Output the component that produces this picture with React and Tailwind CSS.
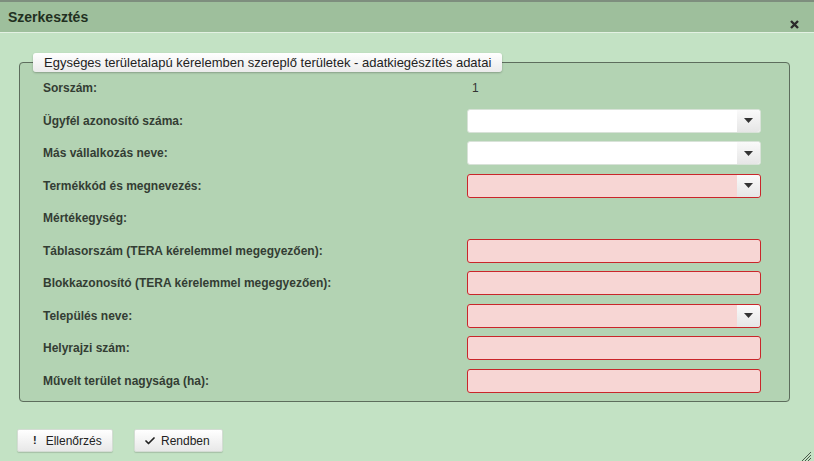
import { Check } from "lucide-react";

const rows = [
  { label: "Sorszám:", type: "text", value: "1" },
  { label: "Ügyfél azonosító száma:", type: "select" },
  { label: "Más vállalkozás neve:", type: "select" },
  { label: "Termékkód és megnevezés:", type: "select", error: true },
  { label: "Mértékegység:", type: "none" },
  { label: "Táblasorszám (TERA kérelemmel megegyezően):", type: "input", error: true },
  { label: "Blokkazonosító (TERA kérelemmel megegyezően):", type: "input", error: true },
  { label: "Település neve:", type: "select", error: true },
  { label: "Helyrajzi szám:", type: "input", error: true },
  { label: "Művelt terület nagysága (ha):", type: "input", error: true },
];

const Field = ({ row }) => {
  if (row.type === "text") {
    return <span className="pl-[5px] text-[12px] text-[#333]">{row.value}</span>;
  }
  if (row.type === "none") return null;
  const box = row.error
    ? "border-[#c9262a] bg-[#f7d6d4]"
    : "border-[#d8e2d8] bg-white";
  return (
    <div className={`flex h-[24px] w-[294px] items-stretch rounded-[3px] border ${box}`}>
      <div className="flex-1" />
      {row.type === "select" && (
        <div className="flex w-[23px] items-center justify-center rounded-r-[3px] bg-gradient-to-b from-[#fafafa] to-[#e6e6e6]">
          <svg width="9" height="5" viewBox="0 0 9 5">
            <path d="M0 0h9L4.5 5z" fill="#333" />
          </svg>
        </div>
      )}
    </div>
  );
};

const App = () => {
  return (
    <div
      className="flex h-[461px] w-[814px] flex-col overflow-hidden bg-[#c3e2c4] text-[#2f3a2f]"
      style={{ fontFamily: '"Liberation Sans", Arial, sans-serif' }}
    >
      <div className="h-[2px] shrink-0 bg-[#7e8e7e]" />
      <div className="flex h-[31px] shrink-0 items-start justify-between border-b border-[#e3f1e3] bg-[#9ebf9c] pl-[8px] pr-[15px]">
        <h1 className="pt-[5px] text-[14px] font-bold text-[#22301f]">Szerkesztés</h1>
        <svg className="mt-[18px]" width="9" height="9" viewBox="0 0 9 9">
          <path d="M1 1l7 7M8 1L1 8" stroke="#2a2a2a" strokeWidth="2.4" />
        </svg>
      </div>

      <fieldset className="ml-[19px] mt-[20px] w-[771px] shrink-0 rounded-[4px] border border-[#5d6d5d] bg-[#b3d3b3] pb-[4px] pl-[23px] pr-[27px]">
        <legend className="ml-[-10px] h-[19px] rounded-[3px] bg-gradient-to-b from-white to-[#ebebeb] px-[11px] text-[13px] leading-[19px] text-[#222] shadow-[0_1px_2px_rgba(0,0,0,0.25)]">
          Egységes területalapú kérelemben szereplő területek - adatkiegészítés adatai
        </legend>
        <div>
          {rows.map((row) => (
            <div key={row.label} className="flex h-[32.5px] items-center">
              <span className="w-[424px] text-[12px] font-bold text-[#333d33]">{row.label}</span>
              <Field row={row} />
            </div>
          ))}
        </div>
      </fieldset>

      <div className="mt-[27px] flex shrink-0 gap-[21px] pl-[17px]">
        <button className="flex h-[23px] w-[96px] items-center gap-[9px] rounded-[2px] border border-[#d4dcd4] bg-gradient-to-b from-white to-[#e8e8e8] pl-[15px] text-[12px] text-[#222] shadow-[0_1px_1px_rgba(0,0,0,0.15)]">
          <span className="text-[11px] font-bold leading-none">!</span>
          Ellenőrzés
        </button>
        <button className="flex h-[23px] w-[89px] items-center gap-[5px] rounded-[2px] border border-[#d4dcd4] bg-gradient-to-b from-white to-[#e8e8e8] pl-[9px] text-[12px] text-[#222] shadow-[0_1px_1px_rgba(0,0,0,0.15)]">
          <Check size={12} strokeWidth={3.5} />
          Rendben
        </button>
      </div>

      <div className="mr-[3px] mt-auto mb-[3px] self-end">
        <svg width="9" height="9" viewBox="0 0 9 9">
          <path d="M9 0L0 9M9 3L3 9M9 6L6 9" stroke="#4a5a4a" strokeWidth="1" />
        </svg>
      </div>
    </div>
  );
};

export default App;
